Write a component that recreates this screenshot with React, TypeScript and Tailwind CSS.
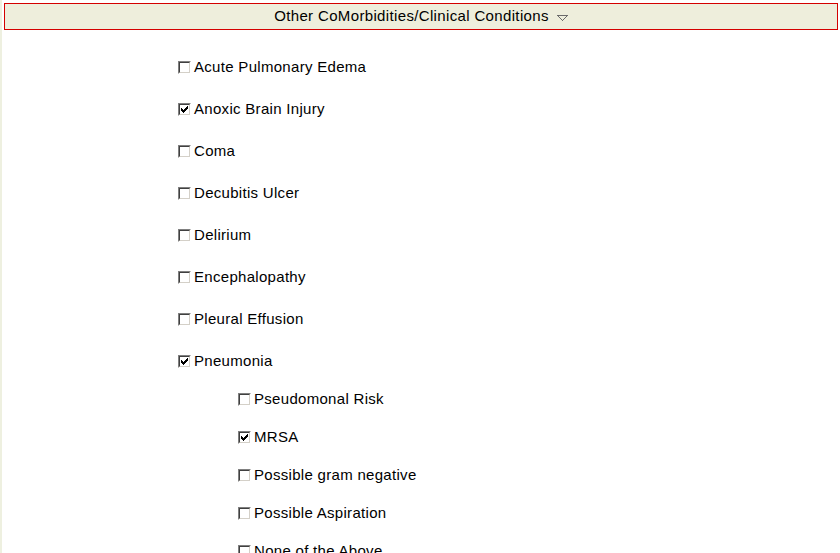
import React from "react";

function Box({ checked }: { checked?: boolean }) {
  return (
    <span className="inline-flex w-[13px] h-[13px] shrink-0 border border-t-[#808080] border-l-[#808080] border-b-[#ffffff] border-r-[#ffffff]">
      <span className="flex w-[11px] h-[11px] items-center justify-center bg-white border border-t-[#404040] border-l-[#404040] border-b-[#d4d0c8] border-r-[#d4d0c8]">
        {checked && (
          <svg width="9" height="9" viewBox="0 0 9 9" shapeRendering="crispEdges">
            <path d="M1 3h1v1H1zM1 4h2v1H1zM1 5h3v1H1zM2 6h2v1H2zM3 7h1v1H3zM4 5h1v2H4zM5 4h1v2H5zM6 3h1v2H6zM7 1h1v3H7zM4 4h1v1H4zM5 3h1v1H5zM6 2h1v1H6z" fill="#000" />
          </svg>
        )}
      </span>
    </span>
  );
}

function Item({ label, checked, sub }: { label: string; checked?: boolean; sub?: boolean }) {
  return (
    <div className={`flex items-center h-[20px] ${sub ? "pl-[236px]" : "pl-[176px]"}`}>
      <Box checked={checked} />
      <span className="ml-[3px] text-[15px] leading-[20px] tracking-[0.3px] text-black">{label}</span>
    </div>
  );
}

export default function App() {
  const main = [
    ["Acute Pulmonary Edema", false],
    ["Anoxic Brain Injury", true],
    ["Coma", false],
    ["Decubitis Ulcer", false],
    ["Delirium", false],
    ["Encephalopathy", false],
    ["Pleural Effusion", false],
    ["Pneumonia", true],
  ] as const;
  const sub = [
    ["Pseudomonal Risk", false],
    ["MRSA", true],
    ["Possible gram negative", false],
    ["Possible Aspiration", false],
    ["None of the Above", false],
  ] as const;
  return (
    <div
      className="w-[840px] h-[553px] overflow-hidden bg-white border-l-2 border-l-[#eef0e0]"
      style={{ fontFamily: '"Liberation Sans", Arial, sans-serif' }}
    >
      <div className="pt-[3px] pl-[2px] pr-[2px]">
        <div className="h-[27px] border border-[#d40000] bg-[#eeeedc] flex items-center justify-center text-[15px] tracking-[0.35px] text-black">
          <span>Other CoMorbidities/Clinical Conditions</span>
          <svg className="ml-[8px] mt-[3px]" width="11" height="7" viewBox="0 0 11 7" shapeRendering="crispEdges">
            <path d="M0 0h11v1H0zM1 1h1v1H1zM9 1h1v1H9zM2 2h1v1H2zM8 2h1v1H8zM3 3h1v1H3zM7 3h1v1H7zM4 4h1v1H4zM6 4h1v1H6zM5 5h1v1H5z" fill="#6b6b6b" />
          </svg>
        </div>
      </div>
      <div className="flex flex-col gap-[22px] pt-[27px]">
        {main.map(([l, c]) => (
          <Item key={l} label={l} checked={c} />
        ))}
      </div>
      <div className="flex flex-col gap-[18px] pt-[18px]">
        {sub.map(([l, c]) => (
          <Item key={l} label={l} checked={c} sub />
        ))}
      </div>
    </div>
  );
}
